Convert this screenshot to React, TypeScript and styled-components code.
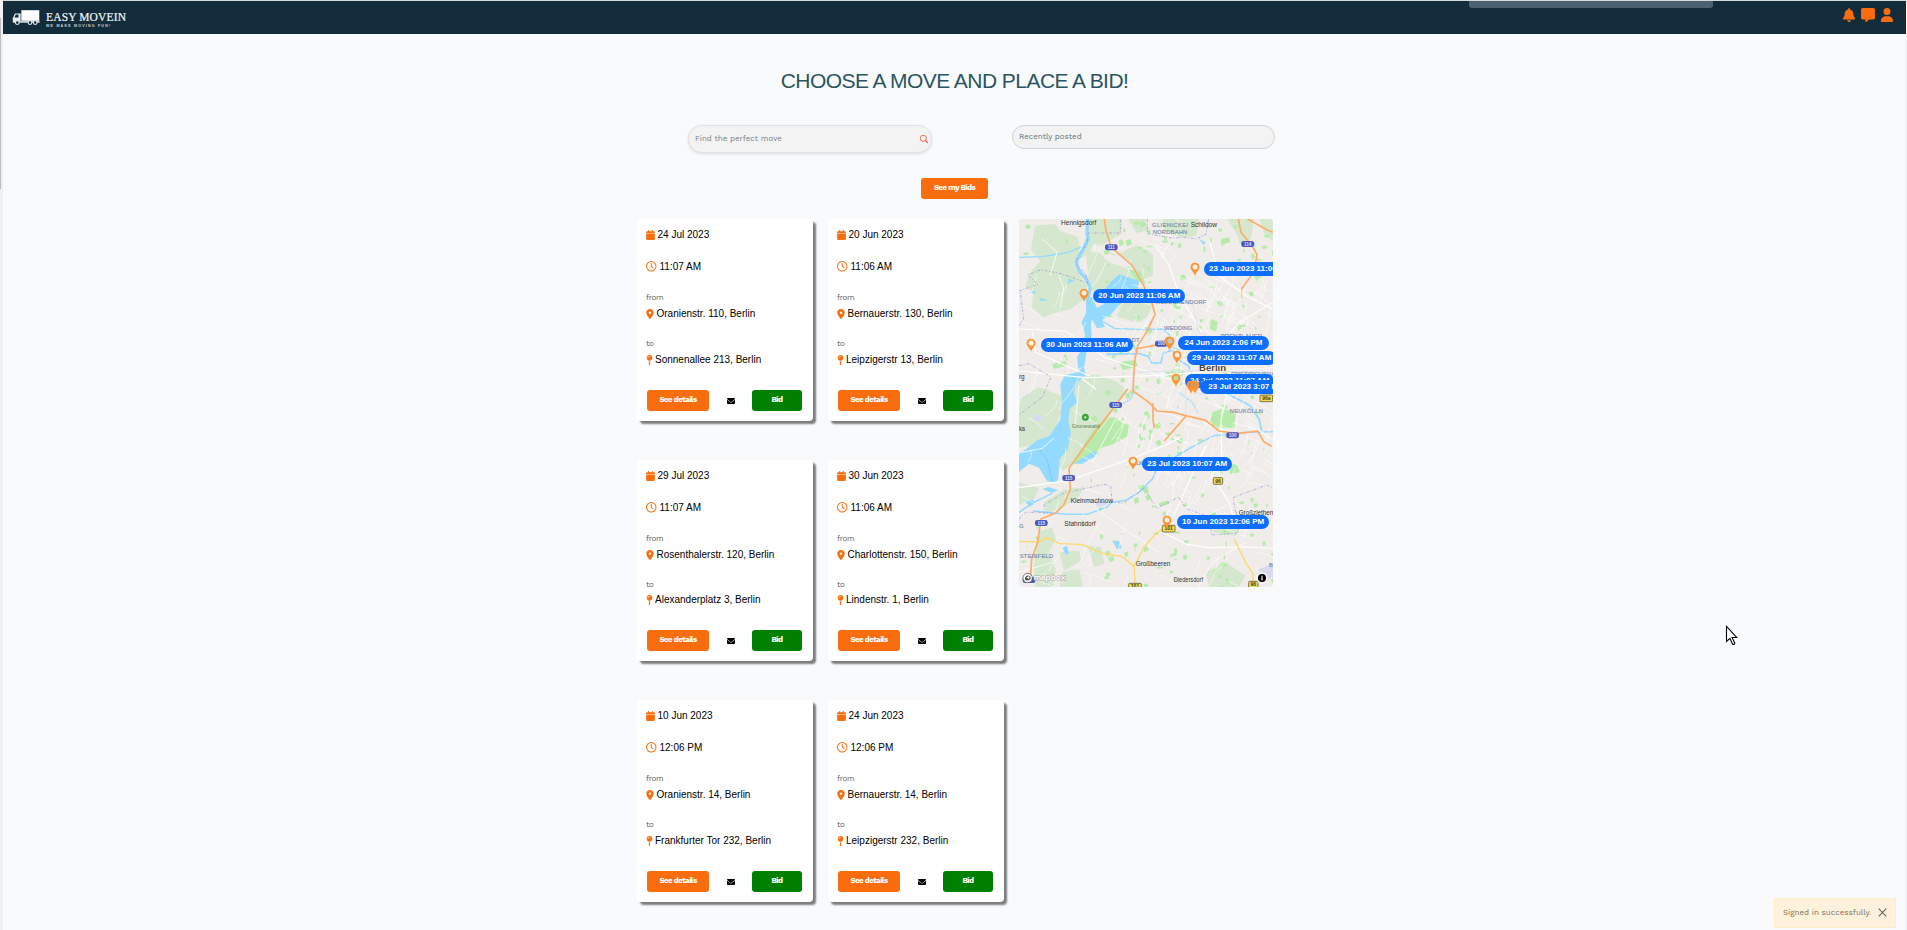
import React from "react";
import styled, { createGlobalStyle } from "styled-components";
import {
  FaBell,
  FaCalendar,
  FaEnvelope,
  FaLocationDot,
  FaMapPin,
  FaMessage,
  FaRegClock,
  FaUser,
} from "react-icons/fa6";
import { BsSearch } from "react-icons/bs";

const ORANGE = "#f96d0e";
const WORK = '"Work Sans", "Open Sans", "Noto Sans", sans-serif';
const ARIAL = 'Arial, "Liberation Sans", sans-serif';

const GlobalStyle = createGlobalStyle`
  * { box-sizing: border-box; }
  html, body { margin: 0; padding: 0; }
  body { background: #f8fafc; font-family: ${ARIAL}; overflow: hidden; }
  button, input { font: inherit; }
`;

const Page = styled.div`
  display: grid;
  grid-template-columns: 3px minmax(0, 1fr) 1px;
  height: 930px;
  overflow: hidden;
`;
const ScrollTrack = styled.div`
  background: #f0f0f0;
  padding-top: 18px;
`;
const ScrollThumb = styled.div`
  width: 1px;
  height: 171px;
  background: #bdbdbd;
`;
const RightEdge = styled.div`
  margin-top: 34px;
  background: #ebedf0;
`;
const Content = styled.div`
  display: flex;
  flex-direction: column;
  min-width: 0;
`;

const Navbar = styled.header`
  display: flex;
  height: 34px;
  border-top: 1px solid #d3dadb;
  background: #132c3c;
  justify-content: space-between;
`;
const Brand = styled.a`
  display: flex;
  gap: 6px;
  padding: 8px 0 0 9px;
`;
const BrandText = styled.div`
  display: flex;
  flex-direction: column;
  color: #f4f6f7;
  padding-top: 1px;
`;
const BrandName = styled.span`
  font: 400 11.5px/14px "Liberation Serif", serif;
  letter-spacing: 0.15px;
  white-space: nowrap;
  -webkit-text-stroke: 0.2px #f4f6f7;
`;
const BrandTag = styled.span`
  font: 700 3.6px/4px "Liberation Sans", sans-serif;
  letter-spacing: 1.2px;
  white-space: nowrap;
  opacity: 0.8;
`;
const NavIcons = styled.nav`
  display: flex;
  gap: 5px;
  padding: 7px 12px 0 0;
  color: ${ORANGE};
  font-size: 14px;
`;
const ShareTab = styled.div`
  position: absolute;
  left: 1469px;
  top: 0;
  width: 244px;
  height: 8px;
  border-radius: 0 0 3px 3px;
  background: #4b6170;
  border-top: 1px solid #d3dadb;
`;

const Title = styled.h1`
  margin: 35px 0 0;
  text-align: center;
  font: 400 21px/24px ${ARIAL};
  letter-spacing: -0.55px;
  color: #2c5560;
`;

const Controls = styled.div`
  display: flex;
  align-items: flex-start;
  margin: 32px 0 0 685px;
  gap: 80px;
`;
const SearchBox = styled.label`
  display: flex;
  align-items: center;
  width: 244px;
  height: 28px;
  border: 1px solid #e1e3e5;
  border-radius: 14px;
  background: #f3f3f3;
  box-shadow: 0 1px 3px rgba(0, 0, 0, 0.12);
  padding: 0 3px 1px 6px;
  svg { color: #f4562c; stroke: #f4562c; stroke-width: 0.6; }
`;
const SearchInput = styled.input`
  flex: 1;
  min-width: 0;
  border: 0;
  padding: 0;
  background: transparent;
  outline: none;
  font: 400 8px/12px ${WORK};
  letter-spacing: -0.03px;
  &::placeholder { color: #7b7f83; opacity: 1; }
`;
const SortSelect = styled.div`
  width: 263px;
  height: 24px;
  border: 1px solid #ccd3da;
  border-radius: 12px;
  background: #f3f3f3;
  padding: 5px 6px;
  font: 400 8px/12px ${WORK};
  letter-spacing: -0.03px;
  color: #66757b;
`;

const Button = styled.button<{ $w: number; $tone?: string }>`
  display: flex;
  align-items: center;
  justify-content: center;
  width: ${(p) => p.$w}px;
  height: 21px;
  border: 0;
  border-radius: 3px;
  padding: 0 0 1px;
  background: ${(p) => p.$tone ?? ORANGE};
  color: #fff;
  font: 700 8px/12px ${WORK};
  letter-spacing: -0.6px;
  white-space: nowrap;
`;
const BidsRow = styled.div`
  display: flex;
  margin: 25px 0 0 918px;
`;

const Board = styled.main`
  display: flex;
  gap: 15px;
  margin: 20px 0 0 634px;
`;
const CardGrid = styled.section`
  display: grid;
  grid-template-columns: 176px 176px;
  column-gap: 15px;
  row-gap: 39px;
  align-content: start;
`;
const Card = styled.article<{ $compact: boolean }>`
  display: flex;
  flex-direction: column;
  height: ${(p) => (p.$compact ? 201 : 202)}px;
  padding: 0 11px 10px 9px;
  border-radius: 4px;
  background: #fff;
  box-shadow: 3px 3px 2px rgba(0, 0, 0, 0.5);
  color: #000;
  font: 400 10px/16px ${ARIAL};
`;
const Line = styled.div<{ $h: number; $gap: number; $icon: number }>`
  display: flex;
  align-items: center;
  gap: ${(p) => p.$gap}px;
  height: ${(p) => p.$h}px;
  white-space: nowrap;
  svg {
    flex: none;
    width: ${(p) => p.$icon}px;
    height: ${(p) => Math.max(10, p.$icon)}px;
    color: ${ORANGE};
  }
`;
const Caption = styled.div<{ $top: number }>`
  margin-top: ${(p) => p.$top}px;
  height: 12px;
  font: 400 8px/12px ${WORK};
  letter-spacing: -0.35px;
  color: #5b6065;
`;
const Actions = styled.div`
  display: flex;
  align-items: center;
  justify-content: space-between;
  margin-top: auto;
  padding-left: 1px;
`;

const MapPanel = styled.aside`
  position: relative;
  width: 254px;
  height: 368px;
  border-radius: 4px;
  overflow: hidden;
  background: #efecea;
`;
const MapCanvas = styled.svg`
  display: block;
`;
const Pin = styled.svg<{ $x: number; $y: number }>`
  position: absolute;
  left: ${(p) => p.$x}px;
  top: ${(p) => p.$y}px;
`;
const Pill = styled.span<{ $x: number; $y: number; $pad: number }>`
  position: absolute;
  left: ${(p) => p.$x}px;
  top: ${(p) => p.$y}px;
  height: 14px;
  border-radius: 7px;
  padding: 0 ${(p) => p.$pad}px;
  background: #0d6efd;
  color: #fff;
  font: 700 8px/13px ${ARIAL};
  white-space: nowrap;
`;

const Toast = styled.div`
  position: absolute;
  left: 1774px;
  top: 898px;
  width: 122px;
  height: 30px;
  display: flex;
  align-items: center;
  justify-content: space-between;
  padding: 0 8px 1px 8px;
  border: 1px solid #ffecc9;
  background: #fff2dc;
  color: #7a7058;
  font: 400 8px/12px ${WORK};
  letter-spacing: 0;
  white-space: nowrap;
`;
const Cursor = styled.svg`
  position: absolute;
  left: 1725px;
  top: 625px;
`;

type Move = { date: string; time: string; from: string; to: string };

const moves: Move[] = [
  { date: "24 Jul 2023", time: "11:07 AM", from: "Oranienstr. 110, Berlin", to: "Sonnenallee 213, Berlin" },
  { date: "20 Jun 2023", time: "11:06 AM", from: "Bernauerstr. 130, Berlin", to: "Leipzigerstr 13, Berlin" },
  { date: "29 Jul 2023", time: "11:07 AM", from: "Rosenthalerstr. 120, Berlin", to: "Alexanderplatz 3, Berlin" },
  { date: "30 Jun 2023", time: "11:06 AM", from: "Charlottenstr. 150, Berlin", to: "Lindenstr. 1, Berlin" },
  { date: "10 Jun 2023", time: "12:06 PM", from: "Oranienstr. 14, Berlin", to: "Frankfurter Tor 232, Berlin" },
  { date: "24 Jun 2023", time: "12:06 PM", from: "Bernauerstr. 14, Berlin", to: "Leipzigerstr 232, Berlin" },
];

function MoveCard({ move, compact }: { move: Move; compact: boolean }) {
  return (
    <Card $compact={compact}>
      <Line $h={32} $gap={2.5} $icon={9}><FaCalendar />{move.date}</Line>
      <Line $h={31} $gap={3} $icon={10.5}><FaRegClock />{move.time}</Line>
      <Caption $top={10}>from</Caption>
      <Line $h={19} $gap={2.5} $icon={8}><FaLocationDot />{move.from}</Line>
      <Caption $top={15}>to</Caption>
      <Line $h={compact ? 18 : 19} $gap={2} $icon={7}><FaMapPin />{move.to}</Line>
      <Actions>
        <Button $w={62}>See details</Button>
        <FaEnvelope size={8} />
        <Button $w={50} $tone="#008000">Bid</Button>
      </Actions>
    </Card>
  );
}

function Truck() {
  return (
    <svg width="28" height="18" viewBox="0 0 28 18">
      <rect x="9.3" y="1.2" width="18" height="10.6" fill="#fff" />
      <path d="M3 4.5h5.6v8.8H.8V9.2z" fill="#e9eef0" />
      <path d="M3.8 5.6h2.7v2.9H2.5z" fill="#132c3c" />
      <path d="M1 13.2h26v-.9H9" stroke="#c9d2d6" fill="none" strokeWidth="1.2" />
      {[5.3, 18, 23.2].map((x) => (
        <circle key={x} cx={x} cy="13.6" r="1.9" fill="#132c3c" stroke="#e9eef0" strokeWidth="1.1" />
      ))}
    </svg>
  );
}

/* Deterministic generator for the fine street and greenery texture. */
function makeRandom(seed: number) {
  let s = seed;
  return () => {
    s = (s * 16807) % 2147483647;
    return s / 2147483647;
  };
}
const rnd = makeRandom(4711);
const streets: string[] = [];
for (let i = 0; i < 330; i++) {
  const x = i < 210 ? 310 + rnd() * 460 : rnd() * 762;
  const y = i < 210 ? 150 + rnd() * 640 : rnd() * 1104;
  const a = (rnd() < 0.5 ? 0.25 : 1.75) + rnd() * 0.5;
  const l = 25 + rnd() * 80;
  const dx = Math.cos(a) * l;
  const dy = Math.sin(a) * l;
  streets.push(`M${x.toFixed(0)} ${y.toFixed(0)}q${(dx / 2 + rnd() * 16).toFixed(0)} ${(dy / 2).toFixed(0)} ${dx.toFixed(0)} ${dy.toFixed(0)}`);
}
const greens: string[] = [];
for (let i = 0; i < 230; i++) {
  const x = (rnd() < 0.7 ? 250 : 0) + rnd() * 510;
  const y = rnd() * 1104;
  const w = 3 + rnd() * 13;
  const h = 3 + rnd() * 12;
  greens.push(`M${x.toFixed(0)} ${y.toFixed(0)}l${w.toFixed(0)} ${(-h / 3).toFixed(0)}l${(w / 3).toFixed(0)} ${h.toFixed(0)}l${(-w).toFixed(0)} ${(h / 2).toFixed(0)}z`);
}

const shields: [number, number, string][] = [
  [277, 85, "111"], [686, 75, "114"], [427, 374, "100"], [290, 558, "115"],
  [641, 649, "100"], [149, 777, "115"], [67, 912, "115"], [30, 1083, "10"],
];
const yellowShields: [number, number, string][] = [
  [597, 786, "96"], [742, 538, "96a"], [449, 929, "101"], [348, 1103, "101"], [703, 1097, "96"],
];
const towns: [number, number, string, number][] = [
  [126, 17, "Hennigsdorf", 106], [515, 24, "Schildow", 79], [155, 851, "Kleinmachnow", 127],
  [136, 921, "Stahnsdorf", 94], [350, 1040, "Großbeeren", 104], [464, 1089, "Diedersdorf", 88],
  [659, 887, "Großziethen", 104], [0, 480, "rg", 17], [0, 635, "ka", 18],
];
const districts: [number, number, string, number][] = [
  [399, 24, "GLIENICKE/", 108], [401, 45, "NORDBAHN", 104], [411, 256, "REINICKENDORF", 151],
  [435, 332, "WEDDING", 85], [605, 358, "PRENZLAUER", 124], [222, 368, "SIEMENSSTADT", 140],
  [636, 470, "FRIEDRICHSHAIN", 150], [632, 581, "NEUKÖLLN", 100], [2, 1016, "STEIßFELD", 101],
  [0, 928, "G", 14], [750, 1045, "B", 12], [352, 739, "LICHTERF", 80],
];

function BerlinMap() {
  return (
    <MapCanvas width="254" height="368" viewBox="0 0 762 1104">
      <rect width="762" height="1104" fill="#efecea" />
      <g fill="#d5e7cf">
        <path d="M48 20l60-5 14 20 55 20 6 36-18 46 18 34 22 30-14 42-36 28-38 8-44 16-35-30 6-40-25-25 15-40 30-34-28-34z" />
        <path d="M208 0h100v44l-64 38-20-10-14 30-30 20 20-70z" />
        <path d="M284 110l70-32 48 28v66l-30 8-48-60-60-24z" />
        <path d="M200 95l40 5 30 30 60 20 20 40-18-8-60 20-40 34-22-40z" />
        <path d="M328 0h52l6 34-34 8z M430 0h110l-8 50-44 6-54-22z M625 0h80l-10 60-30 16-12-30z M722 0h40v66l-24-18z" />
        <path d="M330 200l55 6 20 44-20 42-26 20-70-20z" />
        <path d="M160 480l70-14 60 20 32 26-50 82-60 70-56 72-22 20-24-24 10-80 16-60-8-60z" />
        <path d="M0 540l60-36 70 28-10 40-64 70-56 32z M0 600l130-30-24 70-70 40-36 6z" />
        <path d="M60 936l40-10 10 34-20 40 20 50-6 54h-54l-6-60z M120 1000l60-5 6 30-50 30z" />
        <path d="M75 850l60-38 60-10-14 30-60 40-40 10z M130 1060l50-12 12 56h-70z M0 790l60 16-12 30-48 22z" />
        <path d="M620 890l60 20-30 40-70-10z M560 1060l60-30 60 40-20 34h-90z M206 980l40 4 10 50-30 10z" />
      </g>
      <g fill="#b7ebab">
        <path d="M214 644l42-46 30-4 24 18 22 6-6 34-44 24-34 10-20 28-42 16-26 6z" />
        <path d="M580 580l40-14 30 18-2 42-62 2-12-22z M440 458l36-10 20 10-4 12-52 6z" />
        <path d="M330 150l36 10 14 36-30-10z M300 430l50-8 6 20-44 12z M575 300l22 8-6 30-18-8z M628 732l28 6 6 22-30 6z" />
        <path d="M480 210l12 4-4 26-14-6z M700 160l30-12 8 16-26 22z M606 60l24-6 4 14-28 12z M420 852l26-8 6 10-30 10z M100 436l40-10 4 14-40 10z" />
        <path d={greens.join("")} />
      </g>
      <g fill="#d9daf0">
        <path d="M46 588h20v18h-20z M720 1050l42-16v40l-36 20z M230 850l30-6 4 14-30 6z" />
      </g>
      <g fill="#94daff">
        <path d="M274 190l26-24 36 12 24 8-4 26-30 26-28 22-20 24-30 20 10 20-24 4-14-26-20-6 4-40 20-10 10 20 20-10-6-30z" />
        <path d="M200 230l20 6 2 40-6 40 2 34-16 50-6 40-18 10-4-36 18-30 6-40-10-34 14-30z" />
        <path d="M138 468l38-8 18-20 6 30-26 20-10 30 10 30-22 20-4 40 8 30-10 50-24 30-4 60-8 12-26-6-24-40-30-12-30 24v-52l24-18 34-26 34-12 8-12 24-36 4-62-4-44z" />
        <path d="M20 850l20-10 8 12-16 12z M130 985l14-4 6 22-10 4z M70 810l18-6 30 10-20 8z M280 965l20 0 8 22-14 4z" />
        <path d="M164 734l36-22 24-16 16 8-50 30z M540 60l20 10-6 8z M700 70l8 2-2 14z M340 200l12 10-22 40-10-6z M150 180l16 4-20 10z M30 220l22-4-6 8z M60 236l26 8-20 2z" />
      </g>
      <path d="M54 684l30 36 12 48 4 20" fill="none" stroke="#74c0ec" strokeWidth="2" />
      <g fill="none" stroke="#94daff" strokeLinecap="round" strokeLinejoin="round">
        <path d="M206 0l-2 44 4 16-16 32-20 36 8 28 22 24 12 26-6 28" strokeWidth="10" />
        <path d="M0 115l70-2 76-12 38-16M240 300l46 28 88 4 58-2 20 18" strokeWidth="4" />
        <path d="M340 370l14 32 34 10 10 20h28l6-28 28-12 14 28 34 20 16 34 58 40 24 10M354 404l-90 2" strokeWidth="5" />
        <path d="M0 880l44-30 54-26M44 876l60 6 40 4 60 0 60-22 14-14 42-6 40-24 40-40 16-36 100-58 68-36 100-10 88-2" strokeWidth="4.5" />
        <path d="M600 512l60 30 34 18 26 40 8 36" strokeWidth="5" />
        <path d="M300 560l36-20 10-30M480 520l40 30 16 30M450 380l34 14" strokeWidth="3" />
      </g>
      <g fill="none" stroke="#fff" strokeLinecap="round">
        <path d={streets.join("")} strokeWidth="2" opacity=".85" />
        <path d="M410 80l40 58 30 86 110 190 40 88-24 100 2 100-10 98 34 54 20 76M762 250l-100 60-110 120M570 60l30 110 80 60 82 40M0 330l140 6 120 80 200 66 150 34M0 456l200 20 200-6 362-24M0 806l150-22 190-66 100-40 40-20M430 940l74 36 66 10 114-2 78 4M560 680l-50 110-60 130M40 340l10 60 160 70M190 480l40 30" strokeWidth="3.4" />
        <path d="M10 700l60-12 34-30M120 170l14 36-10 60M70 60l44 40-20 70M180 500l-12 120M290 600l-70 130M620 860l-130 70M230 870l100 70 90 60M0 1060l100-30M540 1100l40-70 100-60" strokeWidth="2.4" />
      </g>
      <path d="M430 370l60 46 110-10 24 100-80 20-60-40M350 460l160-6 252 6M520 250l20 90 110 60 112 40M500 590l0-90" fill="none" stroke="#dfe3f0" strokeWidth="3.5" />
      <g fill="none" stroke="#9893d4" strokeWidth="2" strokeDasharray="9 5 3 5">
        <path d="M0 216l56-20-30-28 40-16 60 12 80 28-6-30-30-22 6-30 28-34 4-34h96V0M0 320l14-20-10-80" />
        <path d="M385 0v44l80 14 22-4 44 6 30-14 8-46M0 440l30-6 66 40-26 60-70 54" />
        <path d="M75 886l0-28 60-36 120-26 20 4 4 50 36 2 60-44 38 60 66-34 20 34 84 30M0 900l20-20 40 0 46 4" />
        <path d="M650 880l-8-44 100-38 20 10M652 880l6 62-80 6-4-30" />
      </g>
      <g fill="none" stroke="#fdd96a" strokeWidth="4">
        <path d="M0 967l60 2 26-14 34 18 70 4 60 26 60 10 36 30 2 61M346 1040l30-56 34-40 40-26M646 962l36 72 20 30v40M668 240v-36" />
      </g>
      <g fill="none" stroke="#ffac68" strokeWidth="5" strokeLinejoin="round">
        <path d="M256 0l4 30 16 54 64 56 34 60 26 56 8 30-26 54-26 40-8 40-4 50 -2 46 48 34 24 26 50 4 36 10 60 14 40 32 56 8 60-8 18 32 24 14" />
        <path d="M350 390l30-6 56-10M326 510l-36 48-90 120-50 70 4 62-20 48-24 24-44 18-10 70-18 50-4 64M402 552v50l4 26M500 592l-64 74M658 0l8 40 34 42 14 24-8 50-38 54M686 0l60 34 16 6" />
      </g>
      <circle cx="199" cy="595" r="7" fill="none" stroke="#37a33c" strokeWidth="7" />
      <g fontFamily="Liberation Sans, sans-serif">
        <rect x="540" y="436" width="84" height="24" fill="#f5e59a" opacity=".6" />
        <text x="540" y="456" fontSize="27" fontWeight="700" fill="#454545" stroke="#fff" strokeWidth="3" paintOrder="stroke" textLength="81" lengthAdjust="spacingAndGlyphs">Berlin</text>
        <text x="158" y="627" fontSize="18" fill="#568556" textLength="84" lengthAdjust="spacingAndGlyphs">Grunewald</text>
        {towns.map(([x, y, t, w]) => (
          <text key={t} x={x} y={y} fontSize="19" fill="#333" textLength={w} lengthAdjust="spacingAndGlyphs">{t}</text>
        ))}
        {districts.map(([x, y, t, w]) => (
          <text key={t} x={x} y={y} fontSize="17.5" fill="#7f8cab" stroke="#7f8cab" strokeWidth=".5" textLength={w} lengthAdjust="spacing">{t}</text>
        ))}
        {shields.map(([x, y, t], i) => (
          <g key={i}>
            <rect x={x - 19} y={y - 9} width="38" height="18" rx="7" fill="#4b55bd" />
            <text x={x} y={y + 5} fontSize="14" fontWeight="700" fill="#dfe2f5" textAnchor="middle">{t}</text>
          </g>
        ))}
        {yellowShields.map(([x, y, t], i) => (
          <g key={i}>
            <rect x={x - (t.length > 2 ? 19 : 14)} y={y - 10} width={t.length > 2 ? 38 : 28} height="20" rx="3" fill="#f7dc55" stroke="#3f3b22" strokeWidth="2" />
            <text x={x} y={y + 5} fontSize="15" fontWeight="700" fill="#3f3b22" textAnchor="middle">{t}</text>
          </g>
        ))}
        <circle cx="26" cy="1077" r="14" fill="#fff" stroke="#666" strokeWidth="2.5" />
        <path d="M18 1083c-1-9 3-14 11-13 7 1 8 9 3 12-4 3-9 3-14 1z" fill="#555" />
        <path d="M28 1070l2 4 4 1-4 2-2 4-2-4-4-2 4-1z" fill="#fff" />
        <text x="44" y="1084" fontSize="24" fontWeight="700" fill="#fff" stroke="#a2a2a2" strokeWidth="3" paintOrder="stroke" textLength="95" lengthAdjust="spacingAndGlyphs">mapbox</text>
        <circle cx="729" cy="1077" r="18" fill="#fff" opacity=".6" />
        <circle cx="729" cy="1077" r="12" fill="#000" />
        <path d="M729 1070v3M729 1075v9" stroke="#fff" strokeWidth="4" />
      </g>
    </MapCanvas>
  );
}

type Marker = { pin: [number, number]; label?: string; at?: [number, number]; inner?: string; pad?: number };
const markers: Marker[] = [
  { pin: [528, 150], label: "23 Jun 2023 11:06 AM", at: [555, 129] },
  { pin: [196, 229], label: "20 Jun 2023 11:06 AM", at: [223, 210] },
  { pin: [37, 378], label: "30 Jun 2023 11:06 AM", at: [66, 357], inner: "#fff" },
  { pin: [449, 371] },
  { pin: [453, 373], label: "24 Jun 2023 2:06 PM", at: [477, 351], inner: "#c9c6c4", pad: 6.6 },
  { pin: [475, 415], label: "29 Jul 2023 11:07 AM", at: [504, 396] },
  { pin: [471, 484], label: "24 Jul 2023 11:07 AM", at: [498, 465], inner: "#b7e0a0" },
  { pin: [515, 504], inner: "#c98a50" },
  { pin: [527, 504], label: "23 Jul 2023 3:07 PM", at: [542, 484], inner: "#d8955a", pad: 8.7 },
  { pin: [342, 733], label: "23 Jul 2023 10:07 AM", at: [370, 714] },
  { pin: [445, 910], label: "10 Jun 2023 12:06 PM", at: [474, 889] },
];

function Markers() {
  return (
    <>
      {markers.map((m, i) => (
        <React.Fragment key={i}>
          <Pin $x={m.pin[0] / 3 - 5} $y={m.pin[1] / 3 - 7} width="10" height="14" viewBox="0 0 30 42">
            <path d="M15 2C7 2 1.5 8 1.5 16c0 7 9 14 13.5 25 4.5-11 13.5-18 13.5-25C28.5 8 23 2 15 2z" fill="#ff9430" />
            <circle cx="15" cy="15" r="7.5" fill={m.inner ?? "#f4eee8"} />
          </Pin>
          {m.label && m.at && (
            <Pill $x={m.at[0] / 3} $y={m.at[1] / 3} $pad={m.pad ?? 5}>{m.label}</Pill>
          )}
        </React.Fragment>
      ))}
    </>
  );
}

export default function App() {
  return (
    <>
      <GlobalStyle />
      <Page>
        <ScrollTrack><ScrollThumb /></ScrollTrack>
        <Content>
          <Navbar>
            <Brand>
              <Truck />
              <BrandText>
                <BrandName>EASY MOVEIN</BrandName>
                <BrandTag>WE MAKE MOVING FUN!</BrandTag>
              </BrandText>
            </Brand>
            <NavIcons><FaBell /><FaMessage /><FaUser /></NavIcons>
          </Navbar>
          <Title>CHOOSE A MOVE AND PLACE A BID!</Title>
          <Controls>
            <SearchBox>
              <SearchInput placeholder="Find the perfect move" />
              <BsSearch size={8} />
            </SearchBox>
            <SortSelect>Recently posted</SortSelect>
          </Controls>
          <BidsRow><Button $w={67}>See my Bids</Button></BidsRow>
          <Board>
            <CardGrid>
              {moves.map((m, i) => (
                <MoveCard key={i} move={m} compact={i === 2 || i === 3} />
              ))}
            </CardGrid>
            <MapPanel>
              <BerlinMap />
              <Markers />
            </MapPanel>
          </Board>
        </Content>
        <RightEdge />
      </Page>
      <ShareTab />
      <Toast>
        Signed in successfully.
        <svg width="9" height="9" viewBox="0 0 9 9"><path d="M.7.7l7.6 7.6M8.3.7L.7 8.3" stroke="#6c6455" strokeWidth="1.1" /></svg>
      </Toast>
      <Cursor width="14" height="22" viewBox="0 0 14 22">
        <path d="M1.5 1.5v15l3.4-3.2 2.6 5.6c.8 1.2 2.6.4 2.2-1l-2.6-5.4h4.6z" fill="#fff" stroke="#000" strokeWidth="1.1" />
      </Cursor>
    </>
  );
}
